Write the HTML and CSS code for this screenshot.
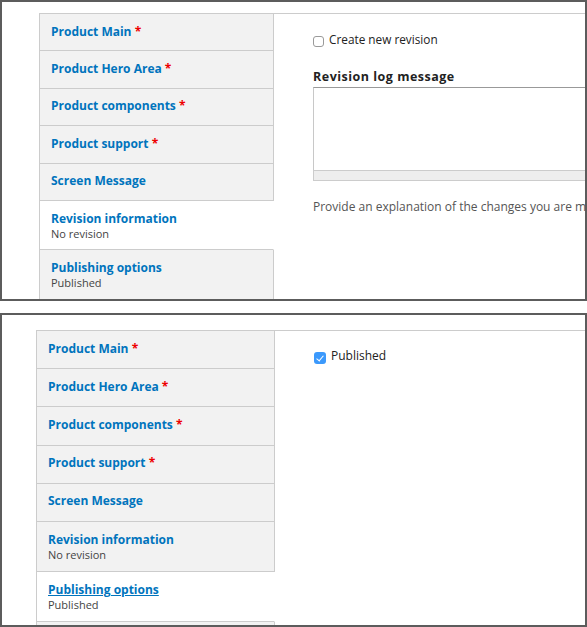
FILE: index.html
```html
<!DOCTYPE html>
<html lang="en">
  <head>
    <meta charset="UTF-8" />
    <title>Edit product</title>
    <link rel="stylesheet" href="styles.css">
  </head>
  <body>
    <!-- revision tab open -->
    <div class="shot shot--revision">
      <div class="vtabs">
        <ul class="vtabs-menu">
          <li class="vtabs-item"><a href="#">Product Main <span class="req">*</span></a></li>
          <li class="vtabs-item"><a href="#">Product Hero Area <span class="req">*</span></a></li>
          <li class="vtabs-item"><a href="#">Product components <span class="req">*</span></a></li>
          <li class="vtabs-item"><a href="#">Product support <span class="req">*</span></a></li>
          <li class="vtabs-item"><a href="#">Screen Message</a></li>
          <li class="vtabs-item is-selected">
            <a href="#">Revision information</a>
            <span class="summary">No revision</span>
          </li>
          <li class="vtabs-item">
            <a href="#">Publishing options</a>
            <span class="summary">Published</span>
          </li>
          <li class="vtabs-item vtabs-item--more"></li>
        </ul>

        <div class="vtabs-pane">
          <label class="check-row">
            <input type="checkbox" />
            <span>Create new revision</span>
          </label>

          <div class="form-item">
            <label class="form-label" for="revlog">Revision log message</label>
            <div class="resizable">
              <textarea id="revlog"></textarea>
              <div class="grippie"></div>
            </div>
            <div class="description">Provide an explanation of the changes you are m</div>
          </div>
        </div>
      </div>
    </div>

    <!-- publishing tab open -->
    <div class="shot shot--publishing">
      <div class="vtabs">
        <ul class="vtabs-menu">
          <li class="vtabs-item"><a href="#">Product Main <span class="req">*</span></a></li>
          <li class="vtabs-item"><a href="#">Product Hero Area <span class="req">*</span></a></li>
          <li class="vtabs-item"><a href="#">Product components <span class="req">*</span></a></li>
          <li class="vtabs-item"><a href="#">Product support <span class="req">*</span></a></li>
          <li class="vtabs-item"><a href="#">Screen Message</a></li>
          <li class="vtabs-item">
            <a href="#">Revision information</a>
            <span class="summary">No revision</span>
          </li>
          <li class="vtabs-item is-selected is-focus">
            <a href="#">Publishing options</a>
            <span class="summary">Published</span>
          </li>
          <li class="vtabs-item vtabs-item--more"></li>
        </ul>

        <div class="vtabs-pane">
          <label class="check-row check-row--big">
            <input type="checkbox" checked />
            <span>Published</span>
          </label>
        </div>
      </div>
    </div>
  </body>
</html>
```

FILE: styles.css
```css
:root {
  --frame: #5c5c5c;
  --line: #cccccc;
  --tab-bg: #f2f2f2;
  --link: #0074bd;
  --text: #333333;
}

body {
  margin: 0;
  background: #fff;
  font-family: "Open Sans", "Noto Sans", sans-serif;
  color: var(--text);
}

/* each capture sits in a dark frame and clips what runs past it */
.shot {
  box-sizing: border-box;
  width: 587px;
  border: 2px solid var(--frame);
  overflow: hidden;
}
.shot--revision {
  height: 301px;
  padding: 11px 0 0 37px;
  --menu-w: 235px;
  --pad-b: 10.5px;
}
.shot--publishing {
  height: 314px;
  margin-top: 12px;
  padding: 15px 0 0 34px;
  --menu-w: 239px;
  --pad-b: 11.3px;
}

.vtabs {
  display: flex;
  width: 760px;
}

.vtabs-menu {
  flex: none;
  width: var(--menu-w);
  margin: 0;
  padding: 0;
  list-style: none;
  border-top: 1px solid var(--line);
}

.vtabs-item {
  border: 1px solid var(--line);
  border-top: 0;
  background: var(--tab-bg);
  padding: 9.5px 11px var(--pad-b);
}
.vtabs-item--more {
  height: 40px;
}
.vtabs-item a {
  display: block;
  font-size: 12px;
  line-height: 16.4px;
  font-weight: 700;
  color: var(--link);
  text-decoration: none;
}
.vtabs-item .req {
  color: #e00;
}
.vtabs-item .summary {
  display: block;
  padding-top: 1px;
  font-size: 11px;
  line-height: 11px;
  color: #444;
}
.vtabs-item.is-selected {
  background: #fff;
  border-right-color: transparent;
}
.vtabs-item.is-focus a {
  text-decoration: underline;
}

.vtabs-pane {
  flex: 1;
  border-top: 1px solid var(--line);
  padding: 17px 0 0 39px;
}

/* checkboxes */
.check-row {
  display: flex;
  align-items: flex-start;
  gap: 5px;
  font-size: 11.8px;
  line-height: 16px;
  color: #222;
}
.check-row input {
  appearance: none;
  -webkit-appearance: none;
  flex: none;
  box-sizing: border-box;
  width: 11px;
  height: 11px;
  margin: 5px 0 0;
  border: 1px solid #9a9a9a;
  border-radius: 3px;
  background: #fff;
  position: relative;
}
.check-row input:checked {
  border: 0;
  background: #3b99fc;
}
.check-row input:checked::after {
  content: "";
  position: absolute;
  left: 4px;
  top: 2px;
  width: 3px;
  height: 6px;
  border: solid #fff;
  border-width: 0 1.6px 1.6px 0;
  transform: rotate(40deg);
}
.check-row--big {
  font-size: 12px;
}
.check-row--big input {
  width: 12px;
  height: 12px;
  margin-top: 4px;
}

.form-item {
  margin-top: 22px;
}
.form-label {
  display: block;
  font-size: 12.5px;
  line-height: 16px;
  font-weight: 700;
  letter-spacing: 0.5px;
  color: #222;
  margin-bottom: 2px;
}

.resizable {
  width: 420px;
}
.resizable textarea {
  display: block;
  box-sizing: border-box;
  width: 100%;
  height: 83px;
  margin: 0;
  border: 1px solid #c8c8c8;
  border-top-color: #999;
  border-bottom: 0;
  resize: none;
}
.grippie {
  height: 9px;
  background: #eee;
  border: 1px solid #ccc;
}

.description {
  margin-top: 18px;
  font-size: 12px;
  line-height: 16px;
  color: #555;
  white-space: nowrap;
}
```
